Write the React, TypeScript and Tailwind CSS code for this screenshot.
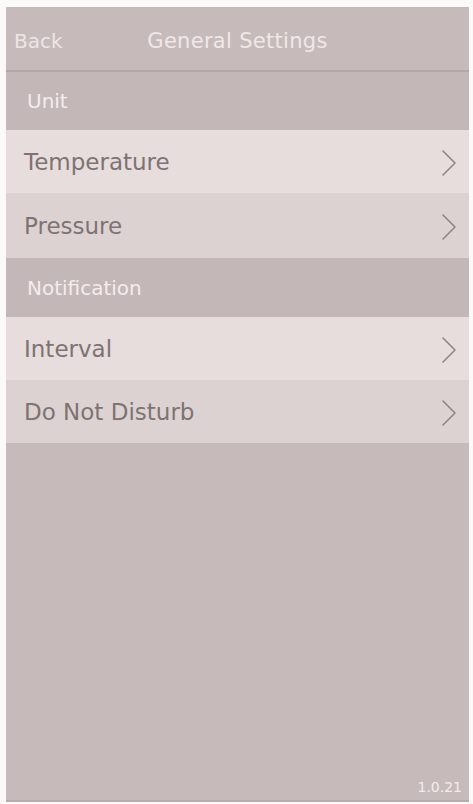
import { ReactNode } from "react";

const font = { fontFamily: '"DejaVu Sans", "Lato", sans-serif' };

function Chevron() {
  return (
    <svg width="18" height="28" viewBox="0 0 18 28" fill="none" className="shrink-0">
      <path d="M3 2 L15 14 L3 26" stroke="#8d8383" strokeWidth="1.5" strokeLinecap="round" strokeLinejoin="round" />
    </svg>
  );
}

function SectionHeader({ children, className }: { children: ReactNode; className: string }) {
  return (
    <div className={`flex items-center pl-[21px] bg-[#c4b7b7] text-[#f3eded] text-[20px] ${className}`}>
      {children}
    </div>
  );
}

function Row({ label, light, h }: { label: string; light?: boolean; h: string }) {
  return (
    <div
      className={`flex items-center justify-between pl-[18px] pr-[11px] pt-[2px] text-[#7d7373] text-[23px] ${h} ${
        light ? "bg-[#e6dddc]" : "bg-[#ddd2d2]"
      }`}
    >
      <span>{label}</span>
      <Chevron />
    </div>
  );
}

export default function App() {
  return (
    <div className="w-[473px] h-[804px] bg-[#fbfaf8] pt-[7px] pl-[6px] pr-[4px] pb-[2px]" style={font}>
      <div className="h-full flex flex-col bg-[#c7baba]">
        {/* Navigation bar */}
        <div className="relative h-[65px] shrink-0 flex items-center pt-[5px] bg-[#c7baba] border-b-2 border-[#b3a6a6]">
          <span className="pl-[8px] text-[20px] text-[#ede6e6]">Back</span>
          <div className="absolute inset-0 flex items-center justify-center pt-[7px] pointer-events-none">
            <span className="text-[21px] tracking-[0.3px] text-[#efe8e8]">General Settings</span>
          </div>
        </div>

        <SectionHeader className="h-[58px] shrink-0">Unit</SectionHeader>
        <Row label="Temperature" light h="h-[63px] shrink-0" />
        <Row label="Pressure" h="h-[65px] shrink-0" />

        <SectionHeader className="h-[59px] shrink-0">Notification</SectionHeader>
        <Row label="Interval" light h="h-[63px] shrink-0" />
        <Row label="Do Not Disturb" h="h-[63px] shrink-0" />

        <div className="flex-1 flex items-end justify-end pr-[7px] pb-[2px]">
          <span className="text-[14px] text-[#f2eeee]">1.0.21</span>
        </div>
        <div className="h-[2px] bg-[#b8abab]" />
      </div>
    </div>
  );
}
